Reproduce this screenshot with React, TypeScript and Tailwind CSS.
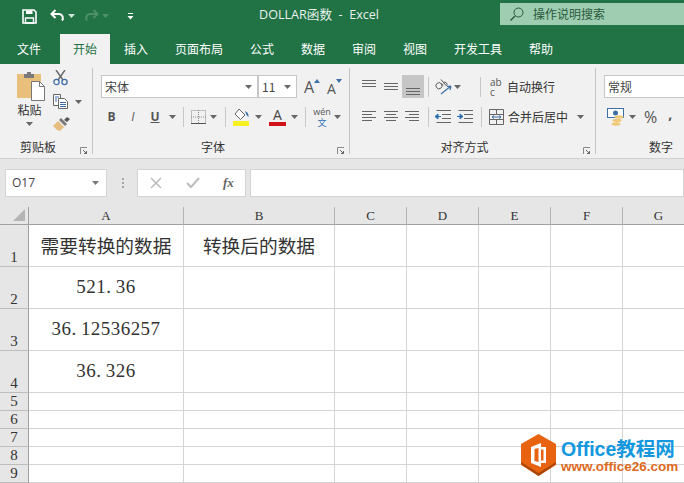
import React from "react";

const ui = { fontFamily: '"Noto Sans CJK SC", "Noto Sans", sans-serif' };
const latin = { fontFamily: '"Open Sans", "Noto Sans CJK SC", sans-serif' };
const serif = { fontFamily: '"Liberation Serif", serif' };

function Caret({ className = "", color = "#666" }: { className?: string; color?: string }) {
  return (
    <svg width="7" height="4" viewBox="0 0 7 4" className={`shrink-0 ${className}`}>
      <path d="M0 0h7L3.5 4z" fill={color} />
    </svg>
  );
}
const Sep = ({ ml }: { ml: string }) => <div className={`w-px h-[20px] bg-[#c8c8c8] shrink-0 ${ml}`} />;

function Lines({ ys, x }: { ys: number[]; x: [number, number][] }) {
  return (
    <svg width="16" height="16" viewBox="0 0 16 16" className="shrink-0">
      {ys.map((y, i) => (
        <path key={i} d={`M${x[i % x.length][0]} ${y + 0.5}H${x[i % x.length][1]}`} stroke="#666" fill="none" />
      ))}
    </svg>
  );
}
const VA = ({ ys }: { ys: number[] }) => <Lines ys={ys} x={[[1, 15]]} />;

function Launcher() {
  return (
    <svg width="8" height="8" viewBox="0 0 8 8" className="absolute right-[4px] bottom-[3px]">
      <path d="M0.5 7V0.5H7" stroke="#888" fill="none" />
      <path d="M3 3l3.5 3.5M6.5 4v2.5H4" stroke="#666" fill="none" />
    </svg>
  );
}

function Group({ w, label, launcher = true, children }: { w: string; label: string; launcher?: boolean; children: React.ReactNode }) {
  return (
    <div className={`${w} shrink-0 relative flex flex-col`}>
      <div className="h-[75px] pt-[11px]">{children}</div>
      <div className="flex-1 flex justify-center pr-[16px] text-[12px] leading-[16px] text-[#333]">{label}</div>
      {launcher && <Launcher />}
    </div>
  );
}
const VLine = () => <div className="w-px my-[4px] bg-[#c4c4c4] shrink-0" />;

function Combo({ w, text, caret = true }: { w: string; text: string; caret?: boolean }) {
  return (
    <div className={`${w} h-[23px] shrink-0 bg-white border border-[#c6c6c6] flex items-center pl-[3px] pr-[5px] text-[12px] text-[#444]`}>
      <span>{text}</span>
      {caret && <Caret className="ml-auto" />}
    </div>
  );
}

function Paste() {
  return (
    <svg width="30" height="30" viewBox="0 0 30 30">
      <path d="M1 3h24v24H1z" fill="#e8c07c" />
      <path d="M8 3h3V1h4v2h3v4H8z" fill="#7a7a7a" />
      <path d="M15.5 10.500h8l5 5v14h-13z" fill="#fff" stroke="#777" />
      <path d="M23.500 10.500v5h5" fill="none" stroke="#777" />
    </svg>
  );
}
function Scissors() {
  return (
    <svg width="15" height="16" viewBox="0 0 15 16">
      <path d="M3 0l7 10M12 0L5 10" stroke="#666" strokeWidth="1.4" fill="none" />
      <circle cx="3.5" cy="12" r="2.6" stroke="#3f6fa8" strokeWidth="1.3" fill="none" />
      <circle cx="11.5" cy="12" r="2.6" stroke="#3f6fa8" strokeWidth="1.3" fill="none" />
    </svg>
  );
}
function Copy() {
  return (
    <svg width="16" height="15" viewBox="0 0 16 15">
      <path d="M0.5 0.5h7v11h-7z" fill="#fff" stroke="#666" />
      <path d="M5.5 4.5h6l3 3v7h-9z" fill="#fff" stroke="#666" />
      <path d="M7 8.5h6M7 10.5h6M7 12.5h6M2 3h4M2 5h2M2 7h2" stroke="#3f6fa8" fill="none" />
    </svg>
  );
}
function Brush() {
  return (
    <svg width="17" height="15" viewBox="0 0 17 15">
      <path d="M0 9l5-5 6 6-4 4-3-1-2-2z" fill="#e6bd80" />
      <path d="M5 4l6 6 2-2-6-6z" fill="#777" transform="translate(1 -1)" />
      <path d="M11 3l3-3 3 2-3 3z" fill="#555" />
    </svg>
  );
}
function BorderIcon() {
  return (
    <svg width="15" height="14" viewBox="0 0 15 14">
      <path d="M0.5 0.5h14v13H.5zM7.5 0v14M0 7h15" stroke="#888" strokeDasharray="1 1" fill="none" />
      <path d="M0 13.5h15" stroke="#555" fill="none" />
    </svg>
  );
}
function FillIcon() {
  return (
    <svg width="18" height="18" viewBox="0 0 18 18">
      <path d="M6 1l6 6-4.5 4.5-5.5-5.500z" fill="#fff" stroke="#666" />
      <path d="M12 3c2.5 1 4 3 3.5 6l-2-2z" fill="#3f6fa8" />
      <rect x="0" y="13" width="16" height="5" fill="#f8f020" />
    </svg>
  );
}
function ColorA() {
  return (
    <div className="w-[17px] flex flex-col items-center">
      <span className="text-[14px] leading-[14px] text-[#444]" style={latin}>A</span>
      <div className="w-[17px] h-[4px] bg-[#d0121b]" />
    </div>
  );
}
function AbAngle() {
  return (
    <svg width="17" height="18" viewBox="0 0 17 18" className="overflow-visible">
      <path d="M1.500 9.500a2.500 2.500 0 1 0 5-3.500a2.500 2.500 0 1 0 -5 3.500M6.500 5.500l1.500 2" stroke="#555" fill="none" />
      <path d="M6 1.500l5 6M8 5a2.300 2.300 0 1 1 3.500 3" stroke="#555" fill="none" />
      <path d="M6 16L16 8M16 8l-4 .500M16 8l-1 4" stroke="#3f6fa8" strokeWidth="1.200" fill="none" />
    </svg>
  );
}
function Indent({ rev }: { rev?: boolean }) {
  return (
    <svg width="17" height="14" viewBox="0 0 17 14">
      <path d="M1.5 0.5H16M7 4.5H16M7 8.5H16M1.5 12.5H16" stroke="#666" fill="none" />
      {rev ? (
        <path d="M0 6.5h3V4l3 2.500L3 9V6.500" fill="#2e6fb0" stroke="#2e6fb0" />
      ) : (
        <path d="M6 6.500H3V4L0 6.500 3 9V6.500" fill="#2e6fb0" stroke="#2e6fb0" />
      )}
    </svg>
  );
}
function Merge() {
  return (
    <svg width="15" height="16" viewBox="0 0 15 16">
      <path d="M.5.500h14v15H.5zM0 5.500h15M0 10.500h15M7.500 0v5M7.500 11v5" stroke="#666" fill="none" />
      <path d="M3 8h9M3 8l2-1.500M3 8l2 1.500M12 8l-2-1.500M12 8l-2 1.500" stroke="#3f6fa8" fill="#f1f1f1" />
    </svg>
  );
}
function Money() {
  return (
    <svg width="18" height="18" viewBox="0 0 18 18">
      <rect x=".5" y=".5" width="16" height="9" fill="#fff" stroke="#3f6fa8" />
      <circle cx="8.500" cy="5" r="2.500" fill="#3f6fa8" />
      <ellipse cx="12" cy="9" rx="4.500" ry="1.700" fill="#f0c878" />
      <ellipse cx="10" cy="12.500" rx="4.500" ry="1.700" fill="#f0c878" />
      <ellipse cx="9" cy="16" rx="4.500" ry="1.700" fill="#f0c878" />
    </svg>
  );
}
function Save() {
  return (
    <svg width="15" height="15" viewBox="0 0 15 15">
      <path d="M1 1h11l2 2v11H1z" fill="none" stroke="#fff" strokeWidth="1.600" />
      <path d="M4 1.500h6.500v3.500H4z" fill="#fff" />
      <path d="M3.500 9h8v5h-8z" fill="none" stroke="#fff" strokeWidth="1.400" />
    </svg>
  );
}
function Undo({ faded }: { faded?: boolean }) {
  const c = faded ? "#4d9069" : "#fff";
  return (
    <svg width="15" height="13" viewBox="0 0 15 13" style={faded ? { transform: "scaleX(-1)" } : undefined}>
      <path d="M2 5h7a4 4 0 0 1 3 6.500" stroke={c} strokeWidth="2" fill="none" />
      <path d="M5.500 1L1.500 5l4 4" stroke={c} strokeWidth="2" fill="none" />
    </svg>
  );
}

const tabs: [string, string][] = [
  ["文件", "w-[60px]"],
  ["开始", "w-[50px]"],
  ["插入", "w-[52px]"],
  ["页面布局", "w-[74px]"],
  ["公式", "w-[52px]"],
  ["数据", "w-[50px]"],
  ["审阅", "w-[52px]"],
  ["视图", "w-[50px]"],
  ["开发工具", "w-[76px]"],
  ["帮助", "w-[50px]"],
];

const rowHeights = [42, 42, 42, 42, 18, 18, 18, 18, 18];
const cols = ["A", "B", "C", "D", "E", "F", "G"];
const data: Record<string, string> = {
  "0-0": "需要转换的数据",
  "0-1": "转换后的数据",
  "1-0": "521.36",
  "2-0": "36.12536257",
  "3-0": "36.326",
};

function CellText({ text }: { text: string }) {
  if (!/^[\d.]+$/.test(text)) {
    return <span className="text-[18.700px] text-[#333]" style={ui}>{text}</span>;
  }
  const [a, b] = text.split(".");
  return (
    <span className="text-[19px] tracking-[0.45px] text-[#333]" style={serif}>
      {a}
      <span className="inline-block w-[9.500px]">.</span>
      {b}
    </span>
  );
}

export default function App() {
  return (
    <div className="w-[684px] h-[483px] overflow-hidden relative bg-white" style={ui}>
      {/* title bar */}
      <div className="h-[34px] bg-[#217346] flex items-center text-white">
        <div className="ml-[22px] mt-[-1px]"><Save /></div>
        <div className="ml-[13px] mt-[-4px]"><Undo /></div>
        <Caret className="ml-[3px] mt-[-3px]" color="#d0e4d8" />
        <div className="ml-[9px] mt-[-4px]"><Undo faded /></div>
        <Caret className="ml-[3px] mt-[-3px]" color="#4d9069" />
        <svg width="7" height="7" viewBox="0 0 7 7" className="ml-[18px] mt-[-1px]">
          <path d="M1 .500h5" stroke="#fff" fill="none" />
          <path d="M.500 3h6l-3 3.500z" fill="#fff" />
        </svg>
        <div className="ml-[125px] text-[12.600px] leading-[16px] mt-[-4px] whitespace-pre text-[#e8f1ec]" style={latin}>
          DOLLAR函数  -  Excel
        </div>
        <div className="ml-auto w-[184px] h-[22px] mt-[-6px] bg-[#9fcdb1] flex items-center text-[12px] text-[#2a5a3c]">
          <svg width="14" height="14" viewBox="0 0 14 14" className="ml-[10px]">
            <circle cx="8.500" cy="5.500" r="4.500" stroke="#2a5a3c" fill="none" />
            <path d="M5 9l-4.500 4.500" stroke="#2a5a3c" strokeWidth="1.400" fill="none" />
          </svg>
          <span className="ml-[9px]">操作说明搜索</span>
        </div>
      </div>
      {/* tabs */}
      <div className="h-[30px] bg-[#217346] flex text-[12px] text-white">
        {tabs.map(([t, w], i) => (
          <div
            key={t}
            className={`${w} h-full flex items-center justify-center shrink-0 ${i === 0 ? "pr-[2px]" : ""} ${i === 1 ? "bg-[#f1f1f1] text-[#217346]" : ""}`}
          >
            {t}
          </div>
        ))}
      </div>
      {/* ribbon */}
      <div className="h-[95px] bg-[#f1f1f1] border-b border-[#d2d2d2] flex overflow-hidden text-[#333]">
        <Group w="w-[92px]" label="剪贴板">
          <div className="flex h-full mt-[-4px]">
            <div className="ml-[16px] w-[30px] flex flex-col items-center">
              <Paste />
              <div className="text-[12px] leading-[16px] mt-[1px] pr-[3px]">粘贴</div>
              <Caret className="mt-[4px] mr-[3px]" />
            </div>
            <div className="ml-[7px] mt-[-1px] flex flex-col">
              <Scissors />
              <div className="flex items-center mt-[8px]">
                <Copy />
                <Caret className="ml-[6px]" />
              </div>
              <div className="mt-[8px]"><Brush /></div>
            </div>
          </div>
        </Group>
        <VLine />
        <Group w="w-[256px]" label="字体">
          <div className="flex items-center ml-[8px]">
            <Combo w="w-[157px]" text="宋体" />
            <Combo w="w-[39px]" text="11" />
            <div className="ml-[7px] w-[16px] h-[20px] relative text-[16px] leading-[21px] text-[#555]" style={latin}>
              A
              <svg width="6" height="4" viewBox="0 0 6 4" className="absolute right-0 top-[2px]"><path d="M3 0l3 4H0z" fill="#3f6fa8" /></svg>
            </div>
            <div className="ml-[7px] w-[15px] h-[20px] relative text-[14px] leading-[23px] text-[#555]" style={latin}>
              A
              <svg width="6" height="4" viewBox="0 0 6 4" className="absolute right-0 top-[2px]"><path d="M0 0h6L3 4z" fill="#3f6fa8" /></svg>
            </div>
          </div>
          <div className="flex items-center ml-[8px] mt-[8px] h-[22px] text-[#555]">
            <span className="w-[21px] text-center text-[12px] font-bold" style={latin}>B</span>
            <span className="w-[22px] text-center text-[12px] italic" style={latin}>I</span>
            <span className="w-[22px] text-center text-[12px] font-bold underline" style={latin}>U</span>
            <div className="w-[12px] flex justify-center"><Caret /></div>
            <Sep ml="ml-[5px]" />
            <div className="ml-[7px]"><BorderIcon /></div>
            <Caret className="ml-[4px]" />
            <Sep ml="ml-[8px]" />
            <div className="ml-[7px]"><FillIcon /></div>
            <Caret className="ml-[4px]" />
            <div className="ml-[7px]"><ColorA /></div>
            <Caret className="ml-[5px]" />
            <Sep ml="ml-[7px]" />
            <div className="ml-[7px] w-[18px] flex flex-col items-center">
              <span className="text-[9px] leading-[11px] text-[#555]" style={latin}>wén</span>
              <span className="text-[9px] leading-[11px] text-[#2e6fb0]">文</span>
            </div>
            <Caret className="ml-[3px]" />
          </div>
        </Group>
        <VLine />
        <Group w="w-[245px]" label="对齐方式">
          <div className="flex items-center h-[23px]">
            <div className="ml-[11px]"><VA ys={[1, 4, 7]} /></div>
            <div className="ml-[6px]"><VA ys={[4, 7, 10]} /></div>
            <div className="ml-[3px] w-[22px] h-[23px] bg-[#c6c6c6] flex items-end justify-center pb-[2px]"><VA ys={[8, 11, 14]} /></div>
            <Sep ml="ml-[4px]" />
            <div className="ml-[6px]"><AbAngle /></div>
            <Caret className="ml-[2px]" />
            <Sep ml="ml-[19px]" />
            <div className="ml-[9px] w-[12px] flex flex-col text-[10px] text-[#555]" style={latin}>
              <span className="leading-[10px] whitespace-nowrap">ab</span>
              <span className="leading-[10px]">c</span>
            </div>
            <span className="ml-[5px] text-[12px] leading-[16px]">自动换行</span>
          </div>
          <div className="flex items-center mt-[8px] h-[22px]">
            <div className="ml-[11px]"><Lines ys={[2, 5, 8, 11]} x={[[1, 15], [1, 11]]} /></div>
            <div className="ml-[6px]"><Lines ys={[2, 5, 8, 11]} x={[[1, 15], [3, 13]]} /></div>
            <div className="ml-[5px]"><Lines ys={[2, 5, 8, 11]} x={[[1, 15], [5, 15]]} /></div>
            <Sep ml="ml-[8px]" />
            <div className="ml-[6px]"><Indent /></div>
            <div className="ml-[5px]"><Indent rev /></div>
            <Sep ml="ml-[7px]" />
            <div className="ml-[7px]"><Merge /></div>
            <span className="ml-[4px] text-[12px] leading-[16px]">合并后居中</span>
            <Caret className="ml-[9px]" />
          </div>
        </Group>
        <VLine />
        <Group w="w-[146px]" label="数字" launcher={false}>
          <div className="ml-[8px]"><Combo w="w-[120px]" text="常规" caret={false} /></div>
          <div className="flex items-center ml-[11px] mt-[8px] h-[22px] text-[#555]">
            <Money />
            <Caret className="ml-[4px]" />
            <span className="ml-[8px] text-[16px] leading-[22px]" style={latin}>%</span>
            <span className="ml-[11px] text-[14px] leading-[14px] font-bold mt-[-7px]" style={latin}>,</span>
          </div>
        </Group>
      </div>
      {/* formula bar */}
      <div className="h-[48px] bg-[#e6e6e6] flex items-start pt-[10px]">
        <div className="ml-[5px] w-[102px] h-[28px] bg-white border border-[#d4d4d4] flex items-center pl-[6px] pr-[7px] text-[12px] text-[#444]" style={latin}>
          O17
          <Caret className="ml-auto" color="#777" />
        </div>
        <div className="ml-[14px] w-[3px] h-[28px] flex flex-col justify-center items-center gap-[2px]">
          <i className="block w-[2px] h-[2px] bg-[#a8a8a8]" />
          <i className="block w-[2px] h-[2px] bg-[#a8a8a8]" />
          <i className="block w-[2px] h-[2px] bg-[#a8a8a8]" />
        </div>
        <div className="ml-[13px] w-[109px] h-[28px] bg-white border border-[#d4d4d4] flex items-center">
          <svg width="12" height="12" viewBox="0 0 12 12" className="ml-[12px] shrink-0"><path d="M1 1l10 10M11 1L1 11" stroke="#bdbdbd" strokeWidth="1.600" fill="none" /></svg>
          <svg width="14" height="12" viewBox="0 0 14 12" className="ml-[24px] shrink-0"><path d="M1 6l4 4 8-9" stroke="#bdbdbd" strokeWidth="2" fill="none" /></svg>
          <span className="ml-[23px] text-[13px] italic font-bold text-[#666]" style={serif}>fx</span>
        </div>
        <div className="ml-[4px] flex-1 h-[28px] bg-white border border-[#d4d4d4]" />
      </div>
      {/* sheet */}
      <div className="grid grid-cols-[29px_155px_151px_72px_72px_72px_72px_72px] grid-rows-[18px_42px_42px_42px_42px_18px_18px_18px_18px_18px]">
        <div className="bg-[#e6e6e6] border-r border-b border-[#a0a0a0] flex items-end justify-end pr-[3px] pb-[3px]">
          <svg width="12" height="12" viewBox="0 0 12 12"><path d="M12 0v12H0z" fill="#b4b4b4" /></svg>
        </div>
        {cols.map((c) => (
          <div key={c} className="bg-[#e6e6e6] border-r border-b border-r-[#b4b4b4] border-b-[#a0a0a0] flex items-end justify-center text-[13px] leading-[16px] text-[#333]" style={serif}>
            {c}
          </div>
        ))}
        {rowHeights.map((_, r) => (
          <React.Fragment key={r}>
            <div className="bg-[#e6e6e6] border-r border-b border-r-[#a0a0a0] border-b-[#bdbdbd] flex items-end justify-center text-[15px] leading-[17px] text-[#333]" style={serif}>
              {r + 1}
            </div>
            {cols.map((_, c) => (
              <div key={c} className="border-r border-b border-[#d4d4d4] flex items-center justify-center whitespace-nowrap">
                {data[`${r}-${c}`] ? <CellText text={data[`${r}-${c}`]} /> : null}
              </div>
            ))}
          </React.Fragment>
        ))}
      </div>
      {/* watermark */}
      <div className="absolute left-[520px] top-[434px] flex items-start">
        <svg width="37" height="42" viewBox="0 0 37 42">
          <path d="M18.500 0L36 10v21L18.500 42 1 31V10z" fill="#e8630f" />
          <path d="M1 30l17.500 12L36 30v-2L18.500 39 1 28z" fill="#a8460a" />
          <path d="M11 13L21 9v24L11 29zM14.500 15v12l4 1V14z" fill="#fff" fillRule="evenodd" />
          <path d="M21 13h5v16h-5v-2.500h2.500v-11H21z" fill="#fff" />
        </svg>
        <div className="ml-[4px] flex flex-col" style={{ fontFamily: '"Liberation Sans", "Noto Sans CJK SC", sans-serif' }}>
          <span className="text-[19.500px] leading-[24px] mt-[3px] font-bold text-[#1398de] whitespace-nowrap">Office教程网</span>
          <span className="text-[13.500px] leading-[14px] mt-[-1px] font-bold text-[#dd6a1e] whitespace-nowrap">www.office26.com</span>
        </div>
      </div>
    </div>
  );
}
